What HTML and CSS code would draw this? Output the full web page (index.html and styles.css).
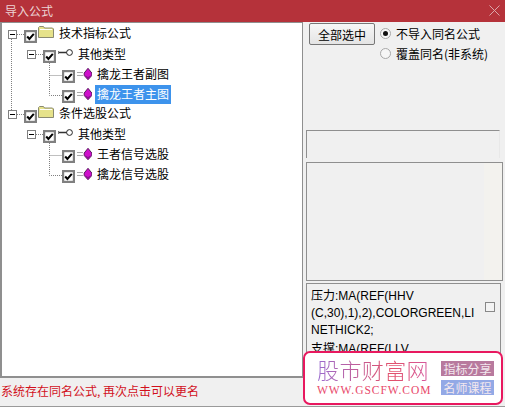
FILE: index.html
```html
<!DOCTYPE html>
<html lang="zh">
<head>
<meta charset="utf-8">
<title>导入公式</title>
<link rel="stylesheet" href="styles.css">
</head>
<body>
<svg class="defs" width="0" height="0" aria-hidden="true">
  <symbol id="check" viewBox="0 0 13 13"><rect x="1" y="1" width="11" height="11" fill="#fff" stroke="#808080" stroke-width="2.400"/><path d="M3.2 6.500 5.400 9 9.800 3.800" fill="none" stroke="#000" stroke-width="2"/></symbol>
  <symbol id="expander" viewBox="0 0 9 9"><rect x=".5" y=".5" width="8" height="8" fill="#fff" stroke="#808080"/><path d="M2 4.500h5" stroke="#000"/></symbol>
  <symbol id="folder" viewBox="0 0 16 12"><path d="M.5 11.500V1.500l1-1h4l1 1.500h8l1 1v8.500z" fill="#e6e28a" stroke="#8a8a70"/><path d="M2 3.500h12" stroke="#fff" stroke-width="1"/></symbol>
  <symbol id="key" viewBox="0 0 15 7"><path d="M0 2v3M1 3.500h8" stroke="#333" stroke-width="1.300" fill="none"/><circle cx="11.500" cy="3.500" r="2.900" fill="#fff" stroke="#222"/></symbol>
  <symbol id="gem" viewBox="0 0 15 12"><path d="M0 4.500h6M0 7.500h6" stroke="#aaa"/><path d="M11 .3 14.800 5V7.500L11 11.700 7.200 7.500V5z" fill="#cf10cc" stroke="#5a1a60"/><path d="M7.500 7 11 9 14.500 7 11 11.300z" fill="#8a1090"/></symbol>
</svg>
<div class="window">
  <header class="titlebar">
    <span class="title">导入公式</span>
    <svg class="close" width="11" height="11" viewBox="0 0 11 11"><path d="M.5.5l10 10M10.500.5l-10 10" stroke="#dba6a9" fill="none"/></svg>
  </header>
  <div class="main">
    <div class="tree">
      <svg class="guides" width="90" height="190" viewBox="0 22 90 190"><path d="M11.500 39v71M17 34.500h7M36 54.500h7M49.500 63v32.500h13M49.500 75.500h13M17 114.500h7M36 134.500h7M49.500 143v32.500h13M49.500 155.500h13" fill="none" stroke="#808080" stroke-dasharray="1 1"/></svg>
      <div class="row lv0"><svg class="exp"><use href="#expander"/></svg><svg class="chk"><use href="#check"/></svg><svg class="folder"><use href="#folder"/></svg><span class="label l0">技术指标公式</span></div>
      <div class="row lv1"><svg class="exp"><use href="#expander"/></svg><svg class="chk"><use href="#check"/></svg><svg class="key"><use href="#key"/></svg><span class="label l1">其他类型</span></div>
      <div class="row lv2"><svg class="chk"><use href="#check"/></svg><svg class="gem"><use href="#gem"/></svg><span class="label">擒龙王者副图</span></div>
      <div class="row lv2"><svg class="chk"><use href="#check"/></svg><svg class="gem"><use href="#gem"/></svg><span class="label sel">擒龙王者主图</span></div>
      <div class="row lv0"><svg class="exp"><use href="#expander"/></svg><svg class="chk"><use href="#check"/></svg><svg class="folder"><use href="#folder"/></svg><span class="label l0">条件选股公式</span></div>
      <div class="row lv1"><svg class="exp"><use href="#expander"/></svg><svg class="chk"><use href="#check"/></svg><svg class="key"><use href="#key"/></svg><span class="label l1">其他类型</span></div>
      <div class="row lv2"><svg class="chk"><use href="#check"/></svg><svg class="gem"><use href="#gem"/></svg><span class="label">王者信号选股</span></div>
      <div class="row lv2"><svg class="chk"><use href="#check"/></svg><svg class="gem"><use href="#gem"/></svg><span class="label">擒龙信号选股</span></div>
    </div>
    <aside class="side">
      <div class="controls">
        <button class="btn" type="button">全部选中</button>
        <div class="radios">
          <div class="radio-row"><span class="radio on"></span>不导入同名公式</div>
          <div class="radio-row"><span class="radio"></span>覆盖同名(非系统)</div>
        </div>
      </div>
      <div class="box-a"></div>
      <div class="box-b"></div>
      <div class="box-c">
        <div class="code"><span class="cjk">压力</span>:MA(REF(HHV<br>(C,30),1),2),COLORGREEN,LI<br>NETHICK2;<br><span class="cjk">支撑</span>:MA(REF(LLV</div>
        <span class="mini-check"></span>
      </div>
    </aside>
  </div>
  <footer class="status">系统存在同名公式, 再次点击可以更名</footer>
  <div class="logo">
    <div class="brand">
      <div class="brand-name">股市财富网</div>
      <div class="brand-url">WWW.GSCFW.COM</div>
    </div>
    <div class="tags">
      <span class="tag tag-a">指标分享</span>
      <span class="tag tag-b">名师课程</span>
    </div>
  </div>
</div>
</body>
</html>
```
FILE: styles.css
```css
* { box-sizing: border-box; }
html, body { margin: 0; padding: 0; }
body { width: 505px; height: 407px; overflow: hidden; font-family: "Noto Sans CJK SC", "Liberation Sans", sans-serif; font-size: 12px; color: #000; }
.defs { position: absolute; }
.window { position: relative; width: 505px; height: 407px; display: grid; grid-template-rows: 22px 356px 29px; background: #f0f0f0; border-bottom: 1px solid #9a9a9a; }
.titlebar { display: flex; align-items: center; justify-content: space-between; background: #b5323a; padding: 0 5px; }
.title { color: #ecd4d5; font-size: 12px; line-height: 22px; }
.close { margin-top: -2px; }
.main { display: grid; grid-template-columns: 303px 202px; min-height: 0; }
.tree { position: relative; background: #fff; border: 1px solid #8f8f8f; border-left-width: 2px; border-bottom-width: 2px; padding-top: 1px; }
.guides { position: absolute; left: -2px; top: -1px; }
.row { position: relative; height: 20px; display: flex; align-items: flex-start; line-height: 18px; white-space: nowrap; }
.lv0 { padding-left: 6px; }
.lv1 { padding-left: 25px; }
.lv2 { padding-left: 60px; }
.exp { width: 9px; height: 9px; margin-top: 6px; flex: none; }
.chk { width: 13px; height: 13px; margin-top: 6px; flex: none; }
.lv0 .chk, .lv1 .chk { margin-left: 7px; }
.folder { width: 16px; height: 12px; margin-left: 1px; margin-top: 2px; flex: none; }
.key { width: 15px; height: 7px; margin-left: 2px; margin-top: 5px; flex: none; }
.gem { width: 15px; height: 12px; margin-left: 2px; margin-top: 4px; flex: none; }
.label { font-size: 12px; line-height: 18px; padding: 0 2px; }
.l0 { margin-left: 3px; }
.l1 { margin-left: 3px; margin-top: 1px; }
.lv2 .label { margin-left: 3px; margin-top: 1px; height: 19px; }
.sel { background: #3d93ec; color: #fff; }
.side { display: flex; flex-direction: column; padding-left: 3px; min-height: 0; overflow: hidden; }
.controls { display: flex; height: 108px; padding: 1px 0 0 3px; gap: 5px; flex: none; }
.btn { width: 66px; height: 22px; padding: 0; font: 12px "Noto Sans CJK SC", sans-serif; color: #000; background: linear-gradient(#f7f7f7, #e4e4e4); border: 1px solid #777; border-radius: 2px; }
.radios { display: flex; flex-direction: column; }
.radio-row { display: flex; align-items: center; height: 20px; gap: 5px; white-space: nowrap; font-size: 12px; }
.radio { width: 11px; height: 11px; border-radius: 50%; background: #f6f6f6; border: 1px solid #a8a8a8; position: relative; display: block; flex: none; }
.radio.on::after { content: ""; position: absolute; left: 2px; top: 2px; width: 5px; height: 5px; border-radius: 50%; background: #111; }
.box-a { height: 28px; width: 194px; border-top: 1px solid #8f8f8f; border-left: 1px solid #8f8f8f; border-right: 1px solid #e8e8e8; flex: none; }
.box-b { height: 119px; width: 197px; border: 1px solid #8f8f8f; margin-top: 4px; background: linear-gradient(90deg, #f0f0f0 91%, #f3f2ee 91%); flex: none; }
.box-c { height: 100px; width: 195px; border: 1px solid #8f8f8f; margin-top: 2px; padding: 2px 0 0 4px; display: flex; font-family: "Liberation Sans", "Noto Sans CJK SC", sans-serif; flex: none; }
.code { width: 165px; font-size: 12px; line-height: 17px; white-space: nowrap; }
.cjk { font-size: 12px; font-family: "Noto Sans CJK SC", sans-serif; }
.mini-check { width: 10px; height: 10px; background: #f4f4f4; border: 1px solid #888; margin: 16px 0 0 9px; flex: none; }
.status { color: #d2101c; font-size: 12px; line-height: 26px; padding-left: 1px; white-space: nowrap; }
.logo { position: absolute; left: 303px; top: 351px; width: 200px; height: 54px; display: flex; background: #fff; border: 2px solid #e8185f; border-radius: 7px; padding: 3px 0 0 12px; }
.brand { width: 124px; padding-top: 1px; }
.brand-name { font-size: 22px; line-height: 24px; font-weight: 300; letter-spacing: .4px; white-space: nowrap; background: linear-gradient(90deg, #9a6ccf, #e2506a 60%, #d05cb0); -webkit-background-clip: text; background-clip: text; color: transparent; }
.brand-url { font-family: "Liberation Serif", serif; font-size: 11.500px; line-height: 14px; margin-top: 2px; letter-spacing: .95px; color: #e8486a; white-space: nowrap; }
.tags { display: flex; flex-direction: column; gap: 4px; padding-top: 5px; }
.tag { display: block; width: 53px; height: 15px; color: #f3e8ee; font-size: 12px; line-height: 15px; text-align: center; white-space: nowrap; }
.tag-a { background: #b87a9e; }
.tag-b { background: #93a9e6; }
```
